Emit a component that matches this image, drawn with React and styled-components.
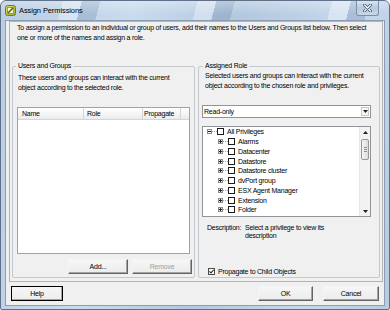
import React from 'react';
import styled, { createGlobalStyle } from 'styled-components';

const GlobalStyle = createGlobalStyle`
  html, body {
    margin: 0;
    padding: 0;
    background: #ffffff;
  }
  body {
    font-family: "Liberation Sans", Arial, sans-serif;
    font-size: 7px;
    letter-spacing: -0.23px;
    color: #000;
  }
`;

const Window = styled.div`
  width: 390px;
  height: 310px;
  box-sizing: border-box;
  border: 1px solid #5f7189;
  border-radius: 6px 6px 2px 2px;
  background: linear-gradient(100deg, #b9cde3 0%, #c9dbee 30%, #b3c8df 55%, #c6d8ec 80%, #b7cbe1 100%);
  display: flex;
  flex-direction: column;
  overflow: hidden;
`;

const TitleBar = styled.div`
  height: 19px;
  flex: none;
  display: flex;
  align-items: center;
  padding-left: 4px;
  background:
    linear-gradient(180deg, rgba(255, 255, 255, 0.3), rgba(255, 255, 255, 0) 70%),
    repeating-linear-gradient(105deg, rgba(255, 255, 255, 0) 0 60px, rgba(255, 255, 255, 0.35) 60px 78px, rgba(70, 100, 140, 0.22) 78px 96px, rgba(255, 255, 255, 0) 96px 130px);
`;

const Title = styled.span`
  margin-left: 3px;
  font-size: 7.5px;
  letter-spacing: -0.1px;
  color: #000;
`;

const CloseButton = styled.div`
  align-self: flex-start;
  margin-left: auto;
  margin-right: 10px;
  width: 23px;
  height: 15px;
  box-sizing: border-box;
  border: 1px solid #7e8fa5;
  border-top: none;
  border-radius: 0 0 3px 3px;
  background: linear-gradient(180deg, #d9e5f2, #b6c9de 50%, #c8d8ea);
  display: flex;
  align-items: center;
  justify-content: center;
`;

const Client = styled.div`
  flex: 1;
  margin: 0 4px 3px 4px;
  border: 1px solid #8c9db2;
  background: #f0f0f0;
  display: flex;
  flex-direction: column;
`;

const Panel = styled.div`
  height: 261px;
  box-sizing: border-box;
  margin: 0 1px 0 3px;
  border: 1px solid #b4b4b4;
  display: flex;
  flex-direction: column;
`;

const Intro = styled.p`
  margin: 1px 0 0 7px;
  line-height: 10px;
  white-space: nowrap;
`;

const Groups = styled.div`
  margin-top: 19px;
  padding: 0 2px;
  display: grid;
  grid-template-columns: 183px 182px;
  gap: 3px;
`;

const Group = styled.fieldset`
  margin: 0;
  padding: 0;
  min-inline-size: 0;
  height: 216px;
  box-sizing: border-box;
  border: 1px solid #c3c9cd;
  border-radius: 2px;
`;

const Legend = styled.legend`
  margin-left: ${p => p.$offset}px;
  padding: 0 2px;
  line-height: 8px;
`;

const Description = styled.div`
  margin: ${p => p.$top}px 0 0 ${p => p.$left}px;
  line-height: 10px;
  white-space: nowrap;
`;

const List = styled.div`
  margin: 14px 4px 0 4px;
  height: 147px;
  box-sizing: border-box;
  border: 1px solid #9ea3aa;
  background: #fff;
`;

const ListHeader = styled.div`
  height: 12px;
  box-sizing: border-box;
  display: grid;
  grid-template-columns: 66px 59px 38px 1fr;
  border-bottom: 1px solid #d5d5d5;
  background: linear-gradient(180deg, #ffffff, #f3f4f6 60%, #e9ebee);
`;

const HeaderCell = styled.div`
  padding-left: ${p => p.$pad}px;
  line-height: 11px;
  border-right: 1px solid #d5d5d5;
  &:last-child {
    border-right: none;
  }
`;

const ButtonRow = styled.div`
  margin: 5px 2px 0 0;
  display: flex;
  justify-content: flex-end;
  gap: 4px;
`;

const Button = styled.div`
  width: ${p => p.$width}px;
  height: 15px;
  box-sizing: border-box;
  display: flex;
  align-items: center;
  justify-content: center;
  background: linear-gradient(180deg, #f6f6f6, #ececec);
  border: 1px solid;
  border-color: ${p => (p.$default ? '#000' : '#f4f4f4 #646464 #646464 #f4f4f4')};
  box-shadow: inset -1px -1px 0 #a3a3a3;
  color: ${p => (p.$disabled ? '#a0a0a0' : '#000')};
`;

const Select = styled.div`
  margin: 14px 0 0 3px;
  width: 169px;
  height: 13px;
  box-sizing: border-box;
  border: 1px solid #8f949b;
  background: #fff;
  display: flex;
  align-items: center;
  padding-left: 1px;
`;

const SelectArrow = styled.div`
  margin-left: auto;
  margin-right: 1px;
  width: 8px;
  height: 9px;
  box-sizing: border-box;
  border: 1px solid #c9c9c9;
  background: #f5f5f5;
  display: flex;
  align-items: center;
  justify-content: center;
`;

const Tree = styled.div`
  margin: 8px 0 0 3px;
  width: 169px;
  height: 91px;
  box-sizing: border-box;
  border: 1px solid #8f949b;
  background: #fff;
  display: flex;
`;

const TreeBody = styled.div`
  flex: 1;
  padding-left: 4px;
`;

const TreeRow = styled.div`
  height: 9.75px;
  display: flex;
  align-items: center;
  padding-left: ${p => (p.$child ? 11 : 0)}px;
  white-space: nowrap;
`;

const Connector = styled.span`
  width: 5px;
  height: 0;
  border-top: 1px dotted #a0a0a0;
`;

const Check = styled.span`
  width: 7px;
  height: 7px;
  box-sizing: border-box;
  border: 1px solid #1c1c1c;
  background: #fff;
  margin-right: 3px;
  flex: none;
`;

const ScrollBar = styled.div`
  width: 10px;
  display: flex;
  flex-direction: column;
  align-items: center;
  background: #f2f2f2;
  border-left: 1px solid #e6e6e6;
`;

const ArrowCell = styled.div`
  height: 10px;
  display: flex;
  align-items: center;
  justify-content: center;
`;

const Thumb = styled.div`
  margin-top: 2px;
  width: 8px;
  height: 21px;
  box-sizing: border-box;
  border: 1px solid #979797;
  border-radius: 2px;
  background: linear-gradient(90deg, #f4f4f4, #dcdcdc);
  display: flex;
  align-items: center;
  justify-content: center;
`;

const Grip = styled.div`
  width: 3px;
  height: 5px;
  background: repeating-linear-gradient(180deg, #8a8a8a 0 1px, #ececec 1px 2px);
`;

const Spacer = styled.div`
  flex: 1;
`;

const Info = styled.div`
  margin: 7px 0 0 8px;
  display: grid;
  grid-template-columns: 38px 1fr;
  line-height: 8px;
`;

const Propagate = styled.label`
  margin: 27px 0 0 9px;
  height: 9px;
  display: flex;
  align-items: center;
  gap: 3px;
`;

const CheckBox = styled.span`
  width: 7px;
  height: 7px;
  box-sizing: border-box;
  border: 1px solid #4a4a4a;
  background: #fff;
  display: flex;
  align-items: center;
  justify-content: center;
`;

const Footer = styled.div`
  margin-top: 4px;
  padding: 0 5px;
  display: flex;
  gap: 10px;
  & > :nth-child(2) {
    margin-left: auto;
  }
`;

const AppIcon = () => (
  <svg width="11" height="11" viewBox="0 0 11 11">
    <defs>
      <linearGradient id="ai" x1="0" y1="0" x2="1" y2="1">
        <stop offset="0" stopColor="#e4de55" />
        <stop offset="1" stopColor="#8fae2e" />
      </linearGradient>
    </defs>
    <rect x="0.5" y="0.5" width="10" height="10" rx="2" fill="url(#ai)" stroke="#6f7d22" />
    <rect x="2.5" y="2.5" width="6" height="6" fill="#f7f4cf" stroke="#8a922c" strokeWidth="0.8" />
    <path d="M3 8 L8 3" stroke="#4f5a1c" strokeWidth="1.4" />
  </svg>
);

const CloseGlyph = () => (
  <svg width="9" height="8" viewBox="0 0 9 8">
    <path d="M1.5 1 L7.5 7 M7.5 1 L1.5 7" stroke="#3c4a5c" strokeWidth="2.6" strokeLinecap="round" />
    <path d="M1.5 1 L7.5 7 M7.5 1 L1.5 7" stroke="#ffffff" strokeWidth="1.2" strokeLinecap="round" />
  </svg>
);

const Expander = ({ open }) => (
  <svg width="5" height="5" viewBox="0 0 5 5" style={{ flex: 'none' }}>
    <rect x="0.5" y="0.5" width="4" height="4" fill="#f4f4f4" stroke="#8c8c8c" />
    <path d={open ? 'M1 2.5 H4' : 'M1 2.5 H4 M2.5 1 V4'} stroke="#222" strokeWidth="1" />
  </svg>
);

const Triangle = ({ up }) => (
  <svg width="5" height="3" viewBox="0 0 5 3">
    <path d={up ? 'M0 3 L2.5 0 L5 3 Z' : 'M0 0 L2.5 3 L5 0 Z'} fill="#202020" />
  </svg>
);

const Tick = () => (
  <svg width="5" height="5" viewBox="0 0 5 5">
    <path d="M0.5 2.4 L2 4 L4.6 0.8" fill="none" stroke="#222" strokeWidth="1.1" />
  </svg>
);

const privileges = [
  'Alarms',
  'Datacenter',
  'Datastore',
  'Datastore cluster',
  'dvPort group',
  'ESX Agent Manager',
  'Extension',
  'Folder',
];

const App = () => (
  <>
    <GlobalStyle />
    <Window>
      <TitleBar>
        <AppIcon />
        <Title>Assign Permissions</Title>
        <CloseButton>
          <CloseGlyph />
        </CloseButton>
      </TitleBar>
      <Client>
        <Panel>
          <Intro>
            To assign a permission to an individual or group of users, add their names to the Users and Groups list below. Then select
            <br />
            one or more of the names and assign a role.
          </Intro>
          <Groups>
            <Group>
              <Legend $offset={3}>Users and Groups</Legend>
              <Description $top={3} $left={5}>
                These users and groups can interact with the current
                <br />
                object according to the selected role.
              </Description>
              <List>
                <ListHeader>
                  <HeaderCell $pad={4}>Name</HeaderCell>
                  <HeaderCell $pad={3}>Role</HeaderCell>
                  <HeaderCell $pad={1}>Propagate</HeaderCell>
                  <HeaderCell />
                </ListHeader>
              </List>
              <ButtonRow>
                <Button $width={60}>Add...</Button>
                <Button $width={60} $disabled>
                  Remove
                </Button>
              </ButtonRow>
            </Group>
            <Group>
              <Legend $offset={4}>Assigned Role</Legend>
              <Description $top={1} $left={6}>
                Selected users and groups can interact with the current
                <br />
                object according to the chosen role and privileges.
              </Description>
              <Select>
                Read-only
                <SelectArrow>
                  <Triangle />
                </SelectArrow>
              </Select>
              <Tree>
                <TreeBody>
                  <TreeRow>
                    <Expander open />
                    <Connector />
                    <Check />
                    All Privileges
                  </TreeRow>
                  {privileges.map(name => (
                    <TreeRow key={name} $child>
                      <Expander />
                      <Connector />
                      <Check />
                      {name}
                    </TreeRow>
                  ))}
                </TreeBody>
                <ScrollBar>
                  <ArrowCell>
                    <Triangle up />
                  </ArrowCell>
                  <Thumb>
                    <Grip />
                  </Thumb>
                  <Spacer />
                  <ArrowCell>
                    <Triangle />
                  </ArrowCell>
                </ScrollBar>
              </Tree>
              <Info>
                <span>Description:</span>
                <span>
                  Select a privilege to view its
                  <br />
                  description
                </span>
              </Info>
              <Propagate>
                <CheckBox>
                  <Tick />
                </CheckBox>
                Propagate to Child Objects
              </Propagate>
            </Group>
          </Groups>
        </Panel>
        <Footer>
          <Button $width={52} $default>
            Help
          </Button>
          <Button $width={55}>OK</Button>
          <Button $width={56}>Cancel</Button>
        </Footer>
      </Client>
    </Window>
  </>
);

export default App;
